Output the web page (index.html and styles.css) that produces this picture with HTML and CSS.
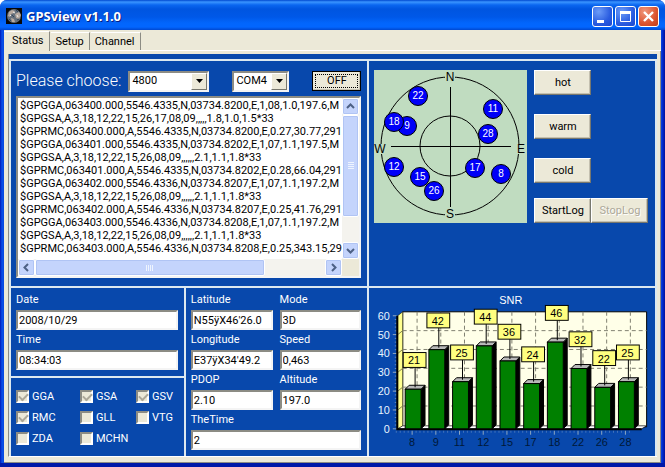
FILE: index.html
```html
<!DOCTYPE html>
<html lang="en">
<head>
<meta charset="utf-8">
<title>GPSview v1.1.0</title>
<link rel="stylesheet" href="styles.css">
</head>
<body>
<div class="window">
  <header class="titlebar">
    <svg class="app-icon" viewBox="0 0 16 16" aria-hidden="true">
      <rect width="16" height="16" fill="#080808"/>
      <circle cx="8" cy="8" r="7" fill="#66707c"/>
      <path d="M3 4l3-2 3 1-1 2-3 1-1 3-2-1zM9 6l4-2 2 3-2 4-3-1zM5 10l3 1 1 3-3 0z" fill="#b8aaa0"/>
      <path d="M3 11l2 2M10 2l2 2M6 7l2 2M11 12l2-1" stroke="#34465c"/>
      <path d="M7 4l2 1M11 7l1 2M4 7l1 1" stroke="#eee"/>
    </svg>
    <h1>GPSview v1.1.0</h1>
    <div class="win-buttons">
      <button type="button" aria-label="Minimize"><svg viewBox="0 0 19 19"><rect x="4" y="13" width="7" height="3" fill="#fff"/></svg></button>
      <button type="button" aria-label="Maximize"><svg viewBox="0 0 19 19"><path d="M4.500 4.500h10v10h-10z" fill="none" stroke="#fff"/><path d="M4 5.500h11" stroke="#fff" stroke-width="3"/></svg></button>
      <button type="button" class="close" aria-label="Close"><svg viewBox="0 0 19 19"><path d="M5 5l9 9M14 5l-9 9" stroke="#fff" stroke-width="2.4"/></svg></button>
    </div>
  </header>

  <nav class="tabs">
    <button type="button" class="active">Status</button>
    <button type="button">Setup</button>
    <button type="button">Channel</button>
  </nav>

  <main class="page">
    <div class="board">
      <section class="panel source">
        <div class="source-bar">
          <label class="big" for="baud">Please choose:</label>
          <span class="combo baud"><select id="baud"><option>4800</option></select><i class="drop"><svg viewBox="0 0 7 4"><path d="M0 0h7L3.500 4z"/></svg></i></span>
          <span class="combo port"><select id="port" aria-label="Port"><option>COM4</option></select><i class="drop"><svg viewBox="0 0 7 4"><path d="M0 0h7L3.500 4z"/></svg></i></span>
          <button type="button" class="btn power"><span>OFF</span></button>
        </div>
        <div class="log">
          <textarea aria-label="NMEA log" wrap="off" readonly>$GPGGA,063400.000,5546.4335,N,03734.8200,E,1,08,1.0,197.6,M
$GPGSA,A,3,18,12,22,15,26,17,08,09,,,,,1.8,1.0,1.5*33
$GPRMC,063400.000,A,5546.4335,N,03734.8200,E,0.27,30.77,291
$GPGGA,063401.000,5546.4335,N,03734.8202,E,1,07,1.1,197.5,M
$GPGSA,A,3,18,12,22,15,26,08,09,,,,,,2.1,1.1,1.8*33
$GPRMC,063401.000,A,5546.4335,N,03734.8202,E,0.28,66.04,291
$GPGGA,063402.000,5546.4336,N,03734.8207,E,1,07,1.1,197.2,M
$GPGSA,A,3,18,12,22,15,26,08,09,,,,,,2.1,1.1,1.8*33
$GPRMC,063402.000,A,5546.4336,N,03734.8207,E,0.25,41.76,291
$GPGGA,063403.000,5546.4336,N,03734.8208,E,1,07,1.1,197.2,M
$GPGSA,A,3,18,12,22,15,26,08,09,,,,,,2.1,1.1,1.8*33
$GPRMC,063403.000,A,5546.4336,N,03734.8208,E,0.25,343.15,29</textarea>
          <div class="vbar" aria-hidden="true">
            <i class="arrow"><svg viewBox="0 0 9 9"><path d="M1 6l3.500-3.500L8 6"/></svg></i>
            <i class="thumb"><svg viewBox="0 0 8 8"><path d="M1 .5h6M1 2.500h6M1 4.500h6M1 6.500h6"/></svg></i>
            <i class="arrow end"><svg viewBox="0 0 9 9"><path d="M1 3l3.500 3.500L8 3"/></svg></i>
          </div>
          <div class="hbar" aria-hidden="true">
            <i class="arrow"><svg viewBox="0 0 9 9"><path d="M6 1L2.500 4.500 6 8"/></svg></i>
            <i class="thumb"><svg viewBox="0 0 8 8"><path d="M.5 1v6M2.500 1v6M4.500 1v6M6.500 1v6"/></svg></i>
            <i class="arrow end"><svg viewBox="0 0 9 9"><path d="M3 1l3.500 3.500L3 8"/></svg></i>
          </div>
        </div>
      </section>

      <section class="panel sky-panel">
        <svg id="sky" class="sky" viewBox="0 0 153 153" role="img" aria-label="Satellite positions"></svg>
        <div class="commands">
          <button type="button" class="btn">hot</button>
          <button type="button" class="btn">warm</button>
          <button type="button" class="btn">cold</button>
          <div class="pair">
            <button type="button" class="btn">StartLog</button>
            <button type="button" class="btn" disabled>StopLog</button>
          </div>
        </div>
      </section>

      <div class="lower">
        <div class="lower-left">
          <section class="panel clock">
            <label for="date">Date</label><input id="date" value="2008/10/29">
            <label for="time">Time</label><input id="time" value="08:34:03">
          </section>
          <section class="panel sentences">
            <label><input type="checkbox" checked disabled>GGA</label>
            <label><input type="checkbox" checked disabled>GSA</label>
            <label><input type="checkbox" checked disabled>GSV</label>
            <label><input type="checkbox" checked disabled>RMC</label>
            <label><input type="checkbox" disabled>GLL</label>
            <label><input type="checkbox" disabled>VTG</label>
            <label><input type="checkbox" disabled>ZDA</label>
            <label><input type="checkbox" disabled>MCHN</label>
          </section>
        </div>
        <section class="panel fix">
          <div><label for="lat">Latitude</label><input id="lat" value="N55ÿX46'26.0"></div>
          <div><label for="mode">Mode</label><input id="mode" value="3D"></div>
          <div><label for="lon">Longitude</label><input id="lon" value="E37ÿX34'49.2"></div>
          <div><label for="speed">Speed</label><input id="speed" value="0,463"></div>
          <div><label for="pdop">PDOP</label><input id="pdop" value="2.10"></div>
          <div><label for="alt">Altitude</label><input id="alt" value="197.0"></div>
          <div class="wide"><label for="thetime">TheTime</label><input id="thetime" value="2"></div>
        </section>
      </div>

      <section class="panel snr">
        <svg id="snr" viewBox="0 0 288 168" role="img" aria-label="SNR chart"></svg>
      </section>
    </div>
  </main>
</div>
<script src="script.js"></script>
</body>
</html>
```

FILE: styles.css
```css
* { box-sizing: border-box; }

:root {
  --blue: #0848ac;
  --face: #ece9d8;
  --shade: #8c8c84;
  --line: #dce8f0;
}

body {
  margin: 0;
  font: 11px/16px Roboto, "Liberation Sans", sans-serif;
  color: #000;
  background: #fff;
}

button, input, select, textarea { font: inherit; color: inherit; margin: 0; border-radius: 0; }
i { font-style: normal; }

.window {
  display: flex;
  flex-direction: column;
  min-height: 100vh;
  padding: 0 4px 4px;
  background: linear-gradient(90deg, #0018b8 0, #0a50e8 2px, #0848e0 4px, #0848e0 calc(100% - 4px), #0030d8 calc(100% - 3px), #00109c 100%);
  border-radius: 7px 7px 0 0;
  box-shadow: inset 0 -4px #0018a8;
}

.titlebar {
  display: flex;
  align-items: center;
  height: 30px;
  margin: 0 -4px;
  padding: 2px 6px 0;
  border-radius: 7px 7px 0 0;
  background: linear-gradient(#0048d0 0, #3a94ff 2px, #0a66f0 5px, #0055e0 9px, #0058e8 17px, #0266fc 23px, #0266ff 27px, #0048d0 30px);
}
.app-icon { width: 16px; height: 16px; }
h1 {
  margin: 0 0 0 4px;
  flex: 1;
  font: bold 13px/20px "Noto Sans", "Open Sans", sans-serif;
  color: #fff;
  text-shadow: 1px 1px #0a1e80;
}
.win-buttons { display: flex; gap: 2px; }
.win-buttons button {
  width: 21px;
  height: 21px;
  padding: 0;
  border: 1px solid #fff;
  border-radius: 3px;
  background: radial-gradient(circle at 30% 25%, #6c9cf8, #2a5ce0 60%, #1c48d0);
}
.win-buttons .close { background: radial-gradient(circle at 30% 25%, #f0987c, #dc5430 60%, #c03c18); }
.win-buttons svg { display: block; width: 19px; height: 19px; }

.tabs {
  display: flex;
  align-items: flex-end;
  height: 21px;
  background: var(--face);
  border-bottom: 1px solid #fff;
}
.tabs button {
  height: 18px;
  padding: 0 5px 0 4px;
  border: 0;
  border-top: 1px solid #fff;
  border-right: 1px solid var(--shade);
  background: var(--face);
  line-height: 16px;
}
.tabs button + button { margin-left: 1px; }
.tabs .active { height: 20px; padding: 0 6px 2px 8px; margin-bottom: -1px; }

.page {
  flex: 1;
  display: flex;
  padding: 3px 3px 5px 4px;
  background: var(--face);
  border-right: 1px solid var(--shade);
  border-bottom: 1px solid var(--shade);
}

.board {
  flex: 1;
  display: grid;
  grid-template-columns: 359fr 290fr;
  grid-template-rows: auto 1fr;
  padding-top: 5px;
  background: var(--blue);
  border-left: 1px solid var(--shade);
  border-bottom: 1px solid #fff;
  color: #fff;
}
.panel {
  border-top: 2px solid var(--line);
  border-left: 2px solid var(--line);
  min-width: 0;
}
.board > .sky-panel, .board > .snr { border-right: 2px solid var(--line); }

.source { padding: 9px 6px 8px 5px; }
.source-bar { display: flex; align-items: center; height: 22px; margin-bottom: 4px; }
.big { flex: 1; font: 300 16px/20px Roboto, "Liberation Sans", sans-serif; }

.combo, .log, .clock input, .fix input {
  border: 2px solid;
  border-color: var(--shade) #f4f4f4 #f4f4f4 var(--shade);
  background: #fff;
  color: #000;
}
.combo { display: flex; position: relative; height: 21px; }
.combo select {
  width: 100%;
  appearance: none;
  border: 0;
  padding: 0 2px;
  background: transparent;
}
.baud { width: 81px; margin-right: 23px; }
.port { width: 57px; margin-right: 23px; }
.drop {
  position: absolute;
  right: 0;
  top: 0;
  bottom: 0;
  width: 16px;
  display: grid;
  place-items: center;
  background: var(--face);
  border: 1px solid;
  border-color: #fff #77776e #77776e #fff;
  pointer-events: none;
}
.drop svg { width: 7px; height: 4px; }

.btn {
  padding: 0;
  height: 25px;
  color: #000;
  background: var(--face);
  border: 1px solid;
  border-color: #fff #77776e #77776e #fff;
  box-shadow: inset -1px -1px #c4c0b0;
}
.btn:disabled { color: #aca899; text-shadow: 1px 1px #fff; }
.power { width: 49px; height: 20px; padding: 2px; border-color: #000; }
.power span { display: block; border: 1px dotted #000; line-height: 12px; }

.log {
  display: grid;
  grid-template-columns: 1fr 17px;
  grid-template-rows: 161px 17px;
  background: var(--face);
}
.log textarea {
  width: 100%;
  height: 100%;
  padding: 1px 0 0 2px;
  border: 0;
  resize: none;
  overflow: hidden;
  line-height: 13px;
  background: #fff;
}
.vbar, .hbar { display: flex; background: #f4f3ee; }
.vbar { flex-direction: column; }
.vbar i, .hbar i {
  display: grid;
  place-items: center;
  background: #c4d4fc;
  border: 1px solid #fff;
  border-radius: 2px;
  box-shadow: inset 0 0 0 1px #b0c4f4;
}
.arrow { width: 17px; height: 17px; }
.arrow svg { width: 9px; height: 9px; }
.arrow path { fill: none; stroke: #4d6185; stroke-width: 2; }
.vbar .thumb { height: 102px; }
.hbar .thumb { flex: 0 0 71%; }
.thumb svg { width: 8px; height: 8px; }
.thumb path { stroke: #eef4fe; fill: none; }
.vbar .end { margin-top: auto; }
.hbar .end { margin-left: auto; }

.sky-panel { display: flex; align-items: flex-start; gap: 7px; padding: 9px 6px 0 5px; }
.sky { width: 153px; height: 153px; flex: none; background: #c0dcc0; }
.commands { display: flex; flex-direction: column; }
.commands .btn { width: 57px; margin-bottom: 19px; }
.pair { display: flex; margin-top: -4px; }

.lower { display: grid; grid-template-columns: 175fr 184fr; }
.lower-left { display: flex; flex-direction: column; }
.clock { padding: 2px 6px 6px 5px; }
.clock label, .fix label { display: block; line-height: 20px; }
.clock input, .fix input { display: block; width: 100%; height: 20px; padding: 0 1px; }
.fix {
  display: grid;
  grid-template-columns: 1fr 1fr;
  column-gap: 7px;
  align-content: start;
  padding: 2px 6px 0 5px;
}
.wide { grid-column: 1 / -1; }

.sentences {
  flex: 1;
  display: grid;
  grid-template-columns: 64px 56px 1fr;
  grid-auto-rows: 21px;
  align-content: start;
  padding: 8px 0 0 5px;
}
.sentences label { display: flex; align-items: center; gap: 3px; }
.sentences input {
  appearance: none;
  width: 13px;
  height: 13px;
  background: var(--face);
  border: 2px solid;
  border-color: var(--shade) #fff #fff var(--shade);
}
.sentences input:checked::after {
  content: "";
  display: block;
  width: 7px;
  height: 4px;
  margin: 1px;
  border: solid #aca899;
  border-width: 0 0 2px 2px;
  transform: rotate(-45deg);
}

.snr svg { display: block; width: 100%; }
svg text { font: 11px "Liberation Sans", Arial, sans-serif; }
.sky text { text-anchor: middle; fill: #000; font-size: 12px; }
.sky .sat { fill: #fff; font-size: 10px; }
.mid { text-anchor: middle; }
.right { text-anchor: end; }
```

FILE: script.js
```js
function add(parent, tag, attrs, text) {
  const el = document.createElementNS("http://www.w3.org/2000/svg", tag);
  for (const key in attrs) el.setAttribute(key, attrs[key]);
  if (text !== undefined) el.textContent = text;
  parent.appendChild(el);
}

// Sky plot
const sky = document.getElementById("sky");
add(sky, "circle", { cx: 76, cy: 76, r: 69, fill: "none", stroke: "#000" });
add(sky, "circle", { cx: 76, cy: 76, r: 30, fill: "none", stroke: "#000" });
add(sky, "path", { d: "M76.5 17v120M17 76.5h120", stroke: "#000" });
for (const [name, x, y] of [["N", 76, 7], ["S", 76, 144], ["E", 147, 79], ["W", 6, 79]]) {
  add(sky, "rect", { x: x - 5, y: y - 5, width: 10, height: 10, fill: "#c0dcc0" });
  add(sky, "text", { x: x, y: y + 4 }, name);
}
for (const [id, x, y] of [[22, 44, 26], [11, 119, 39], [9, 33, 56], [18, 20, 52], [28, 114, 64],
  [12, 20, 97], [15, 46, 107], [26, 60, 121], [17, 101, 98], [8, 127, 104]]) {
  add(sky, "circle", { cx: x, cy: y, r: 9.5, fill: "#0000f8", stroke: "#000" });
  add(sky, "text", { x: x, y: y + 3, class: "sat" }, id);
}

// Signal chart
const snr = document.getElementById("snr");
const base = 142, unit = 1.9, step = 23.9;
add(snr, "text", { x: 143, y: 16, class: "mid", fill: "#fff" }, "SNR");
add(snr, "path", { d: "M34 24H280V140H34z", fill: "#ffffe8", stroke: "#000" });
add(snr, "path", { d: "M29 28L34 24V140L29 142z", fill: "#ffff90", stroke: "#000", "stroke-width": 0.5 });
add(snr, "path", { d: "M29 142L34 139H280L275 142z", fill: "#fff", stroke: "#000", "stroke-width": 0.7 });
for (let v = 0; v <= 60; v += 10) {
  const y = base - v * unit;
  if (v > 0 && v < 60) {
    add(snr, "path", { d: `M34 ${y - 4}H280`, stroke: "#808070", "stroke-dasharray": "4 3" });
    add(snr, "path", { d: `M29 ${y}l5 -4`, stroke: "#808050" });
  }
  add(snr, "path", { d: `M24 ${y}h4`, stroke: "#90a8c0" });
  add(snr, "text", { x: 21, y: y + 4, class: "right", fill: "#e8f4ff" }, v);
}
for (let v = 2; v < 60; v += 2) add(snr, "path", { d: `M26 ${base - v * unit}h2`, stroke: "#90a8c0", "stroke-width": 0.7 });
add(snr, "path", { d: "M28.5 28V142.5H275", fill: "none", stroke: "#000", "stroke-width": 2 });
const bars = [[8, 21], [9, 42], [11, 25], [12, 44], [15, 36], [17, 24], [18, 46], [22, 32], [26, 22], [28, 25]];
bars.forEach((b, i) => {
  const x = 48.5 + i * step;
  add(snr, "path", { d: `M${x} 24V140`, stroke: "#808070", "stroke-dasharray": "4 3" });
});
bars.forEach(([id, v], i) => {
  const x = 36.5 + i * step, top = base - v * unit;
  add(snr, "path", { d: `M${x + 16} ${top}l4 -4V${base - 4}l-4 4z`, fill: "#000", stroke: "#000" });
  add(snr, "path", { d: `M${x} ${top}l4 -4h16l-4 4z`, fill: "#b8b8b8", stroke: "#000" });
  add(snr, "rect", { x: x, y: top, width: 16, height: base - top, fill: "#008000", stroke: "#000" });
  add(snr, "path", { d: `M${x + 7} ${base + 2}v4`, stroke: "#90a8c0" });
  for (const dx of [-9, -5, -1, 3, 11]) add(snr, "path", { d: `M${x + dx} ${base + 2}v2`, stroke: "#6088c0", "stroke-width": 0.7 });
  add(snr, "text", { x: x + 7, y: 159, class: "mid", fill: "#001838" }, id);
});
bars.forEach(([id, v], i) => {
  const x = 36.5 + i * step, top = base - v * unit;
  add(snr, "path", { d: `M${x + 10} ${top - 22}v20`, stroke: "#000" });
  add(snr, "rect", { x: x - 2, y: top - 37, width: 23, height: 15, fill: "#ffff80", stroke: "#000" });
  add(snr, "text", { x: x + 9, y: top - 25, class: "mid" }, v);
});
```
